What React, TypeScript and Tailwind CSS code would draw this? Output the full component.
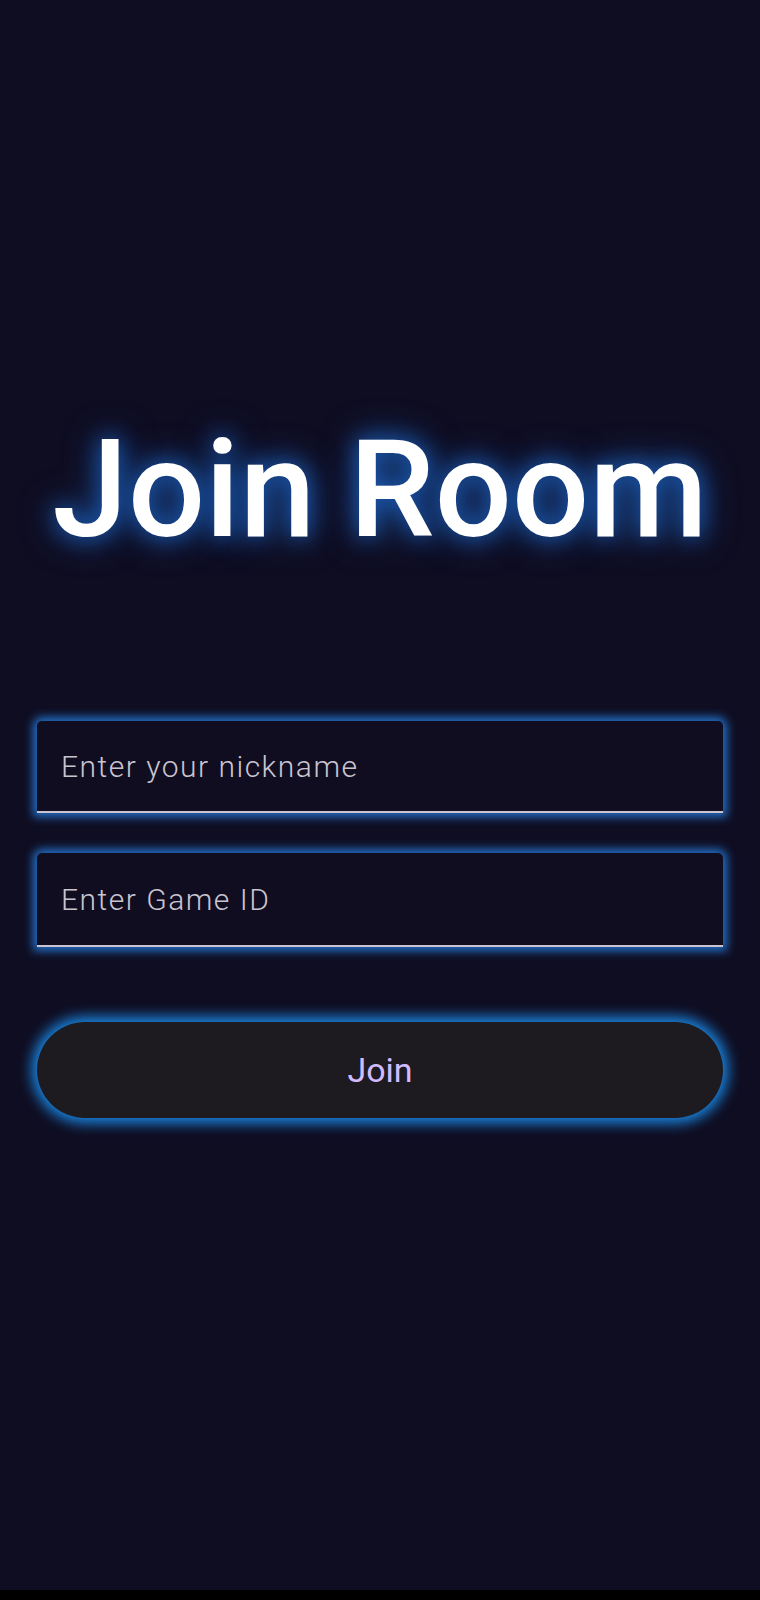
import { useState } from "react";

export default function App() {
  const [nickname, setNickname] = useState("");
  const [gameId, setGameId] = useState("");

  return (
    <div className="flex h-[1600px] w-full flex-col bg-[#0f0d21] font-['Roboto',sans-serif]">
      <main className="flex flex-1 flex-col px-[37px] pt-[422px]">
        <h1 className="text-center text-[136px] font-medium leading-none text-white [text-shadow:0_0_22px_#1c5fbc,0_0_36px_#1a4f9a]">
          Join Room
        </h1>

        <div className="mt-[163px] flex flex-col gap-[40px]">
          <input
            value={nickname}
            onChange={(e) => setNickname(e.target.value)}
            placeholder="Enter your nickname"
            className="h-[92px] w-full rounded-t-[5px] border-b-2 border-[#cac4d0] bg-[#100d20] px-[24px] text-[30px] font-light tracking-[1.5px] text-white outline-none shadow-[0_0_10px_4px_#2370c8] placeholder:text-[#cac4d0]"
          />
          <input
            value={gameId}
            onChange={(e) => setGameId(e.target.value)}
            placeholder="Enter Game ID"
            className="h-[94px] w-full rounded-t-[5px] border-b-2 border-[#cac4d0] bg-[#100d20] px-[24px] text-[30px] font-light tracking-[1.5px] text-white outline-none shadow-[0_0_10px_4px_#2370c8] placeholder:text-[#cac4d0]"
          />
        </div>

        <button
          type="button"
          className="mt-[75px] h-[96px] w-full rounded-full bg-[#1d1b20] text-[34px] text-[#d0bcff] shadow-[0_0_14px_5px_#1a8ae8]"
        >
          Join
        </button>
      </main>
      <div className="h-[10px] bg-black" />
    </div>
  );
}
